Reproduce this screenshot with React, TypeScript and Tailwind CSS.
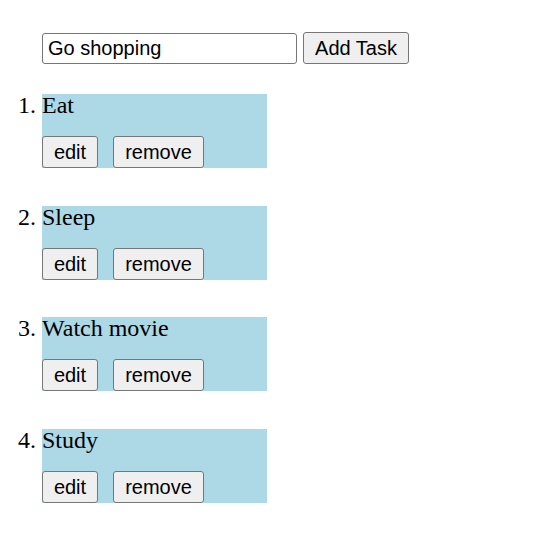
import React, { useState } from 'react';

const initialTasks = ['Eat', 'Sleep', 'Watch movie', 'Study'];

const btn =
  "h-[32px] px-[6px] bg-[#efefef] border border-[#767676] rounded-[3px] text-[20px] text-black font-['Liberation_Sans',Arial,sans-serif] leading-none";

export default function App() {
  const [tasks, setTasks] = useState<string[]>(initialTasks);
  const [value, setValue] = useState('Go shopping');

  const addTask = () => {
    if (!value.trim()) return;
    setTasks([...tasks, value.trim()]);
    setValue('');
  };

  return (
    <div className="min-h-screen bg-white pt-[32px] font-['Liberation_Serif','Times_New_Roman',serif] text-black">
      <div className="flex items-center gap-[6px] pl-[42px]">
        <input
          value={value}
          onChange={(e) => setValue(e.target.value)}
          className="w-[255px] h-[31px] px-[5px] border border-[#767676] rounded-[3px] text-[20px] font-['Liberation_Sans',Arial,sans-serif] outline-none"
        />
        <button onClick={addTask} className={`${btn} w-[106px] h-[31px]`}>
          Add Task
        </button>
      </div>

      <ol className="list-decimal pl-[42px] mt-[30px] text-[24px] leading-[22px]">
        {tasks.map((task, i) => (
          <li key={i} className="w-[225px] bg-[#add8e6] mb-[37.67px]">
            <span className="block">{task}</span>
            <div className="flex gap-[15px] mt-[20px]">
              <button className={`${btn} w-[56px]`}>edit</button>
              <button
                onClick={() => setTasks(tasks.filter((_, j) => j !== i))}
                className={`${btn} w-[91px]`}
              >
                remove
              </button>
            </div>
          </li>
        ))}
      </ol>
    </div>
  );
}
